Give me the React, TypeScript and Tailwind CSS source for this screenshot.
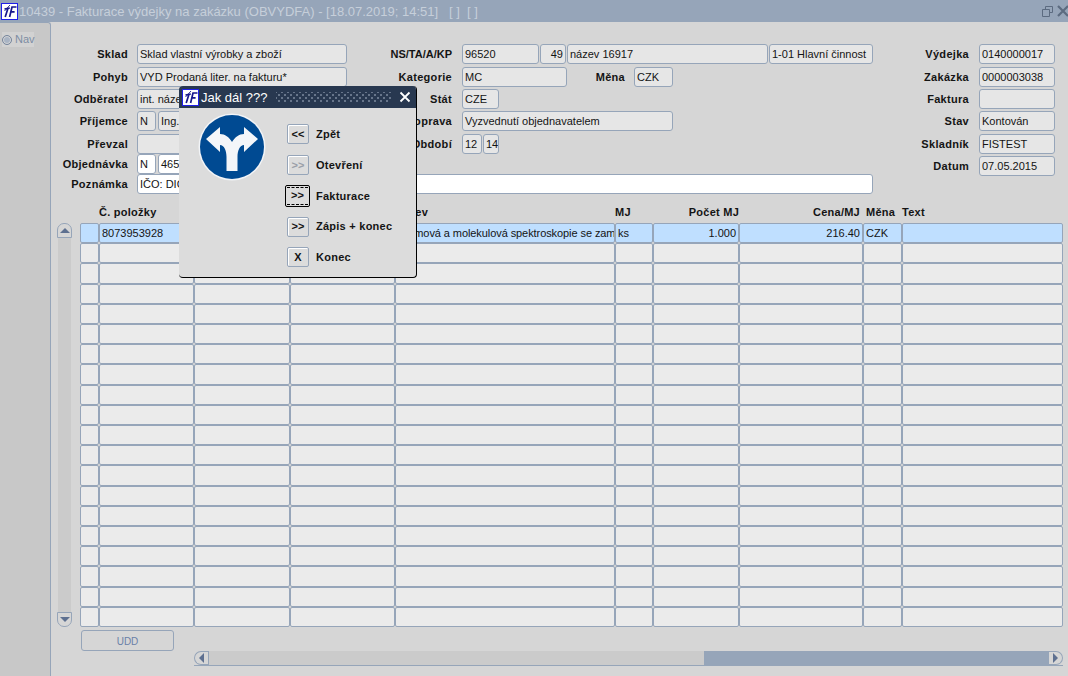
import type { ReactNode } from 'react';

const LINE = 'border border-[#96a5b9]';

function LogoBox({ size = 'h-[17px] w-[17px]' }: { size?: string }) {
  return (
    <svg viewBox="0 0 17 17" className={`${size} shrink-0`}>
      <rect x="0.5" y="0.5" width="16" height="16" fill="#fff" stroke="#1f1fe8" />
      <path d="M3.500 6 8.800 5M7 5.200 4.200 14" stroke="#16168c" strokeWidth="1.700" fill="none" />
      <path d="M8.600 14 11 4h4.500M10 8.800h3.600" stroke="#16168c" strokeWidth="1.700" fill="none" />
      <path d="M3.500 8 9 2" stroke="#16168c" strokeWidth="0.900" fill="none" />
    </svg>
  );
}

function Label({
  w,
  mid = false,
  tight = false,
  children,
}: {
  w: string;
  mid?: boolean;
  tight?: boolean;
  children: ReactNode;
}) {
  return (
    <div
      className={`${w} shrink-0 truncate text-right text-[11px] font-bold leading-[20px] text-[#141414] ${
        mid ? 'pe-[10px]' : 'pe-[9px]'
      } ${tight ? '' : 'tracking-[0.3px]'}`}
    >
      {children}
    </div>
  );
}

function Field({
  w,
  value = '',
  white = false,
  right = false,
}: {
  w: string;
  value?: string;
  white?: boolean;
  right?: boolean;
}) {
  return (
    <div
      className={`${w} h-[20px] shrink-0 overflow-hidden whitespace-nowrap rounded-[3px] ${LINE} px-[2px] text-[11px] leading-[18px] text-[#141414] ${
        white ? 'bg-white' : 'bg-[#e6e6e6]'
      } ${right ? 'text-right' : ''}`}
    >
      {value}
    </div>
  );
}

function LeftForm() {
  return (
    <div className="flex w-[822px] flex-col">
      <div className="flex">
        <Label w="w-[86px]">Sklad</Label>
        <Field w="w-[210px]" value="Sklad vlastní výrobky a zboží" />
        <Label w="w-[115px]" mid tight>NS/TA/A/KP</Label>
        <div className="flex gap-px">
          <Field w="w-[77px]" value="96520" />
          <Field w="w-[26px]" value="49" right />
          <Field w="w-[201px]" value="název 16917" />
          <Field w="w-[104px]" value="1-01 Hlavní činnost" />
        </div>
      </div>
      <div className="mt-[3px] flex">
        <Label w="w-[86px]">Pohyb</Label>
        <Field w="w-[210px]" value="VYD Prodaná liter. na fakturu*" />
        <Label w="w-[115px]" mid>Kategorie</Label>
        <Field w="w-[105px]" value="MC" />
        <Label w="w-[67px]">Měna</Label>
        <Field w="w-[39px]" value="CZK" />
      </div>
      <div className="mt-[2px] flex">
        <Label w="w-[86px]">Odběratel</Label>
        <Field w="w-[210px]" value="int. název" />
        <Label w="w-[115px]" mid>Stát</Label>
        <Field w="w-[37px]" value="CZE" />
      </div>
      <div className="mt-[2px] flex">
        <Label w="w-[86px]">Příjemce</Label>
        <div className="flex w-[210px] gap-[2px]">
          <Field w="w-[19px]" value="N" />
          <Field w="w-[189px]" value="Ing." />
        </div>
        <Label w="w-[115px]" mid>Doprava</Label>
        <Field w="w-[211px]" value="Vyzvednutí objednavatelem" />
      </div>
      <div className="mt-[3px] flex">
        <Label w="w-[86px]">Převzal</Label>
        <Field w="w-[210px]" />
        <Label w="w-[115px]" mid>Období</Label>
        <div className="flex gap-[1px]">
          <Field w="w-[20px]" value="12" />
          <Field w="w-[16px]" value="14" />
        </div>
      </div>
      <div className="flex">
        <Label w="w-[86px]">Objednávka</Label>
        <div className="flex w-[210px] gap-[2px]">
          <Field w="w-[19px]" value="N" white />
          <Field w="w-[140px]" value="465" white />
        </div>
      </div>
      <div className="flex">
        <Label w="w-[86px]">Poznámka</Label>
        <Field w="w-[736px]" value="IČO: DIČ:" white />
      </div>
    </div>
  );
}

function RightForm() {
  const rows = [
    { label: 'Výdejka', value: '0140000017', mt: '' },
    { label: 'Zakázka', value: '0000003038', mt: 'mt-[3px]' },
    { label: 'Faktura', value: '', mt: 'mt-[2px]' },
    { label: 'Stav', value: 'Kontován', mt: 'mt-[2px]' },
    { label: 'Skladník', value: 'FISTEST', mt: 'mt-[3px]' },
    { label: 'Datum', value: '07.05.2015', mt: 'mt-[2px]' },
  ];
  return (
    <div className="flex flex-col">
      {rows.map((r) => (
        <div key={r.label} className={`flex ${r.mt}`}>
          <Label w="w-[106px]" mid>{r.label}</Label>
          <Field w="w-[76px]" value={r.value} />
        </div>
      ))}
    </div>
  );
}

const COLS = [
  'w-[19px]',
  'w-[95px]',
  'w-[96px]',
  'w-[105px]',
  'w-[220px]',
  'w-[38px]',
  'w-[86px]',
  'w-[124px]',
  'w-[39px]',
  'w-[161px]',
];

function Row({ first = false }: { first?: boolean }) {
  const cells: ReactNode[] = first
    ? [
        '',
        '8073953928',
        '',
        '',
        <span className="tracking-[-0.08px]">Atomová a molekulová spektroskopie se zam</span>,
        'ks',
        '1.000',
        '216.40',
        'CZK',
        '',
      ]
    : Array(10).fill('');
  return (
    <div className="flex min-h-0 flex-1">
      {COLS.map((c, i) => (
        <div
          key={c + i}
          className={`${c} shrink-0 overflow-hidden whitespace-nowrap rounded-[2px] ${LINE} px-[2px] text-[11px] leading-[18px] text-[#141414] ${
            first ? 'bg-[#bfdfff]' : 'bg-[#ebebeb]'
          } ${i === 6 || i === 7 ? 'text-right' : ''}`}
        >
          {cells[i]}
        </div>
      ))}
    </div>
  );
}

function VScroll() {
  return (
    <div className="flex h-[404px] w-[15px] flex-col items-center">
      <div className={`flex h-[15px] w-[15px] shrink-0 items-center justify-center rounded-t-[7px] ${LINE} bg-[#d6d6d6]`}>
        <div className="h-0 w-0 border-x-[5px] border-b-[5px] border-x-transparent border-b-[#5e7090]" />
      </div>
      <div className="w-[13px] flex-1 bg-[#cbcbcb]" />
      <div className={`flex h-[15px] w-[15px] shrink-0 items-center justify-center rounded-b-[7px] ${LINE} bg-[#d6d6d6]`}>
        <div className="h-0 w-0 border-x-[5px] border-t-[5px] border-x-transparent border-t-[#5e7090]" />
      </div>
    </div>
  );
}

function Table() {
  return (
    <div className="ms-[6px] mt-[10px]">
      <div className="flex h-[19px] text-[11px] font-bold leading-[16px] tracking-[0.25px] text-[#141414]">
        <div className="w-[23px] shrink-0" />
        <div className="w-[19px] shrink-0" />
        <div className="w-[296px] shrink-0">Č. položky</div>
        <div className="w-[220px] shrink-0">Název</div>
        <div className="w-[38px] shrink-0">MJ</div>
        <div className="w-[86px] shrink-0 text-right">Počet MJ</div>
        <div className="w-[124px] shrink-0 pe-[3px] text-right">Cena/MJ</div>
        <div className="w-[39px] shrink-0 ps-[3px]">Měna</div>
        <div className="flex-1">Text</div>
      </div>
      <div className="flex gap-[8px]">
        <VScroll />
        <div className="flex h-[404px] flex-col">
          {Array.from({ length: 20 }, (_, i) => (
            <Row key={i} first={i === 0} />
          ))}
        </div>
      </div>
    </div>
  );
}

function HScroll() {
  return (
    <div className="ms-[143px] flex h-[15px] w-[869px] border-b border-[#96a5b9]">
      <div className="flex w-[14px] shrink-0 items-center justify-center rounded-s-[7px] border-y border-s border-[#96a5b9] bg-[#d6d6d6]">
        <div className="h-0 w-0 border-y-[5px] border-e-[5px] border-y-transparent border-e-[#5e7090]" />
      </div>
      <div className="w-[496px] shrink-0 border-s border-[#96a5b9] bg-[#cbcbcb]" />
      <div className="flex-1 bg-[#96a5b9]" />
      <div className="flex w-[14px] shrink-0 items-center justify-center rounded-e-[7px] border-y border-e border-[#96a5b9] bg-[#d6d6d6]">
        <div className="h-0 w-0 border-y-[5px] border-s-[5px] border-y-transparent border-s-[#5e7090]" />
      </div>
    </div>
  );
}

function SignIcon() {
  return (
    <svg viewBox="0 0 68 68" className="h-[68px] w-[68px] shrink-0">
      <circle cx="34" cy="34" r="33.500" fill="#f2f4f7" />
      <circle cx="34" cy="34" r="32" fill="#004a92" />
      <path
        d="M8 26 22 14v7c5 0 9 3 12 8 3-5 7-8 12-8v-7l14 12-14 13v-7c-4 0-6.500 5-6.500 12v14h-11V44c0-7-2.500-12-6.500-12v7z"
        fill="#f4f6f9"
      />
    </svg>
  );
}

function DialogButton({
  glyph,
  label,
  disabled = false,
  focused = false,
}: {
  glyph: string;
  label: string;
  disabled?: boolean;
  focused?: boolean;
}) {
  return (
    <div className="flex h-[30.75px] items-center">
      {focused ? (
        <div className="ms-[-2px] me-[6px] flex h-[22px] w-[25px] items-center justify-center rounded-[2px] border border-black bg-[#dcdcdc] p-[1px]">
          <div className="flex h-full w-full items-center justify-center border-y border-dashed border-black text-[11px] font-bold leading-none text-[#141414]">
            {glyph}
          </div>
        </div>
      ) : (
        <div
          className={`me-[7px] flex h-[20px] w-[22px] items-center justify-center rounded-[2px] border border-[#96a5b9] bg-[#dcdcdc] text-[11px] font-bold leading-none shadow-[inset_1px_1px_0_#fff] ${
            disabled ? 'text-[#9a9fa8]' : 'text-[#141414]'
          }`}
        >
          {glyph}
        </div>
      )}
      <span className="text-[11px] font-bold tracking-[0.25px] text-[#141414]">{label}</span>
    </div>
  );
}

function Dialog() {
  return (
    <div className="absolute left-[179px] top-[86px] flex h-[192px] w-[238px] flex-col overflow-hidden rounded-[4px] border-r border-b border-black bg-[#dcdcdc]">
      <div className="flex h-[22px] shrink-0 items-center bg-[#283850] ps-[3px]">
        <LogoBox />
        <span className="ms-[2px] w-[66px] shrink-0 whitespace-nowrap text-[13px] leading-none text-white">Jak dál ???</span>
        <div className="ms-[9px] h-[11px] w-[115px] shrink-0 bg-[radial-gradient(#8a97aa_0.6px,transparent_0.9px),radial-gradient(#8a97aa_0.6px,transparent_0.9px)] bg-[length:6px_6px] bg-[position:0_0,3px_3px]" />
        <svg viewBox="0 0 12 12" className="ms-[8px] h-[12px] w-[12px] shrink-0">
          <path d="M1.500 1.500l9 9M10.500 1.500l-9 9" stroke="#fff" strokeWidth="1.800" />
        </svg>
      </div>
      <div className="flex">
        <div className="ms-[19px] mt-[5px]">
          <SignIcon />
        </div>
        <div className="ms-[21px] mt-[11px] flex flex-col">
          <DialogButton glyph="<<" label="Zpět" />
          <DialogButton glyph=">>" label="Otevření" disabled />
          <DialogButton glyph=">>" label="Fakturace" focused />
          <DialogButton glyph=">>" label="Zápis + konec" />
          <DialogButton glyph="X" label="Konec" />
        </div>
      </div>
    </div>
  );
}

export default function App() {
  return (
    <div className="relative h-[676px] w-[1068px] overflow-hidden bg-[#d6d6d6] font-['Liberation_Sans',Arial,sans-serif]">
      <div className="flex h-[22px] items-center bg-[#96a5b9]">
        <LogoBox size="h-[17px] w-[17px] ms-px" />
        <span className="ms-[1px] whitespace-pre text-[13px] leading-none text-[#c6cfda]">
          10439 - Fakturace výdejky na zakázku (OBVYDFA) - [18.07.2019; 14:51]   [ ]  [ ]
        </span>
        <svg viewBox="0 0 11 11" className="ms-auto h-[11px] w-[11px]">
          <path d="M3.500 3V.5h7v6H8M.5 3.500h7v7h-7z" fill="none" stroke="#5c6b80" />
        </svg>
        <svg viewBox="0 0 12 12" className="ms-[4px] me-[-1px] h-[12px] w-[12px]">
          <path d="M1 1l10 10M11 1L1 11" stroke="#5c6b80" strokeWidth="2.200" />
        </svg>
      </div>
      <div className="flex h-[654px]">
        <div className="w-[51px] shrink-0 rounded-tr-[3px] border-r border-t border-[#96a5b9] bg-[#c8c8c8] pt-[9px]">
          <div className="ms-[2px] flex h-[15px] w-[32px] items-center bg-[#d2d2d2]">
            <div className="h-[10px] w-[10px] shrink-0 rounded-full border border-[#76859c] bg-[#a9b4c4] shadow-[inset_0_0_0_1px_#d6d6d6]" />
            <span className="ms-[3px] text-[11px] leading-none text-[#7d8da4]">Nav</span>
          </div>
        </div>
        <div className="flex-1 pt-[22px]">
          <div className="flex">
            <LeftForm />
            <RightForm />
          </div>
          <Table />
          <div className="ms-[30px] mt-[3px] h-[21px] w-[93px] rounded-[3px] border border-[#96a5b9] text-center text-[10px] leading-[21px] text-[#6a80a8]">
            UDD
          </div>
          <HScroll />
        </div>
      </div>
      <Dialog />
    </div>
  );
}
